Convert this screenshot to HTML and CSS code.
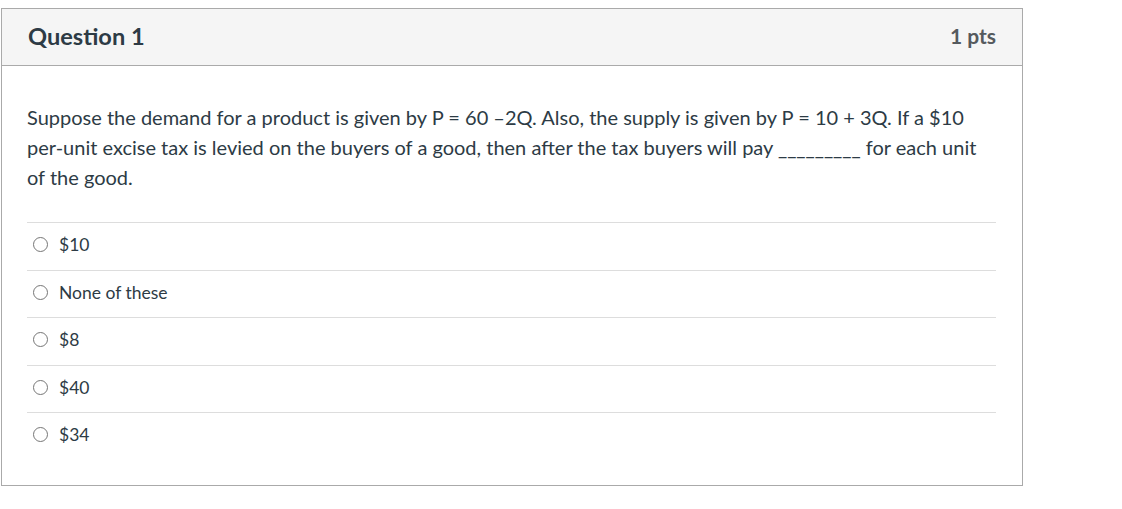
FILE: index.html
```html
<!DOCTYPE html>
<html>
<head>
<meta charset="utf-8">
<link rel="stylesheet" href="styles.css">
</head>
<body>
<div class="question">
  <div class="header">
    <h2 class="title">Question 1</h2>
    <span class="points">1 pts</span>
  </div>
  <div class="content">
    <p class="text">Suppose the demand for a product is given by P = 60 –2Q. Also, the supply is given by P = 10 + 3Q. If a $10 per-unit excise tax is levied on the buyers of a good, then after the tax buyers will pay _________ for each unit of the good.</p>
    <div class="answers">
      <label class="answer"><span class="radio"></span><span class="label">$10</span></label>
      <label class="answer"><span class="radio"></span><span class="label">None of these</span></label>
      <label class="answer"><span class="radio"></span><span class="label">$8</span></label>
      <label class="answer"><span class="radio"></span><span class="label">$40</span></label>
      <label class="answer"><span class="radio"></span><span class="label">$34</span></label>
    </div>
  </div>
</div>
</body>
</html>
```

FILE: styles.css
```css
html, body {
  margin: 0;
  padding: 0;
  background: #fff;
}
body {
  padding: 8px 0 0 1px;
  font-family: Lato, "Liberation Sans", sans-serif;
  color: #2d3b45;
}
.question {
  width: 1022px;
  box-sizing: border-box;
  border: 1px solid #aaaaaa;
}
.header {
  display: flex;
  align-items: center;
  justify-content: space-between;
  box-sizing: border-box;
  height: 57px;
  background: #f5f5f5;
  border-bottom: 1px solid #aaaaaa;
  padding: 0 26px 2px 26px;
}
.title {
  margin: 0;
  font-size: 23.6px;
  font-weight: 700;
  color: #2d3b45;
}
.points {
  font-size: 21px;
  font-weight: 700;
  color: #555a5e;
  padding-bottom: 2px;
}
.content {
  padding: 36px 26px 25px 25px;
}
.text {
  margin: 0 0 30px 0;
  font-size: 20px;
  line-height: 30px;
  color: #2d3b45;
}
.answers {
  display: flex;
  flex-direction: column;
}
.answer {
  display: flex;
  align-items: center;
  height: 47.5px;
  box-sizing: border-box;
  border-top: 1px solid #dddddd;
  padding-left: 6px;
  padding-bottom: 3px;
  gap: 11px;
  font-size: 17.5px;
  color: #2d3b45;
}
.radio {
  width: 15px;
  height: 15px;
  box-sizing: border-box;
  border: 1px solid #767676;
  border-radius: 50%;
  background: #fff;
  flex: none;
}
```
